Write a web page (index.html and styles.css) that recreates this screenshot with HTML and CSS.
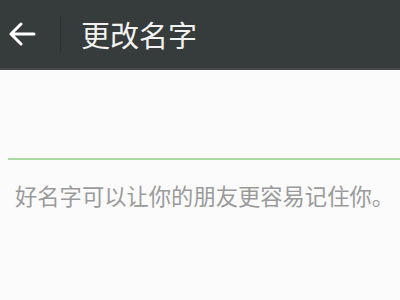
FILE: index.html
```html
<!DOCTYPE html>
<html lang="zh">
<head>
  <meta charset="utf-8">
  <link rel="stylesheet" href="styles.css">
</head>
<body>
  <div class="header">
    <div class="back">
      <svg width="28" height="24" viewBox="0 0 28 24">
        <path d="M26 12H3M13 2L3 12l10 10" fill="none" stroke="#fff" stroke-width="3" stroke-linecap="round" stroke-linejoin="round"/>
      </svg>
    </div>
    <div class="divider"></div>
    <div class="title">更改名字</div>
  </div>

  <div class="content">
    <div class="input"></div>
    <p class="hint">好名字可以让你的朋友更容易记住你。</p>
  </div>
</body>
</html>
```

FILE: styles.css
```css
body {
  margin: 0;
  font-family: "Noto Sans CJK SC", "Noto Sans", sans-serif;
  background-color: #fbfbfb;
}

.header {
  display: flex;
  align-items: center;
  height: 68px;
  background-color: #363b3b;
  border-bottom: 2px solid #4a474c;
}

.back {
  display: flex;
  align-items: center;
  padding-left: 8px;
  width: 40px;
}

.divider {
  width: 1px;
  height: 36px;
  background-color: #2b2f2f;
  margin-left: 12px;
}

.title {
  margin-left: 20px;
  color: #f2f2f2;
  font-size: 29px;
  line-height: 1;
}

.content {
  padding-left: 8px;
}

.input {
  height: 88px;
  border-bottom: 2px solid #a9d9a1;
}

.hint {
  margin: 19px 0 0 7px;
  color: #9a9a9a;
  font-size: 22.3px;
  line-height: 32px;
}
```
